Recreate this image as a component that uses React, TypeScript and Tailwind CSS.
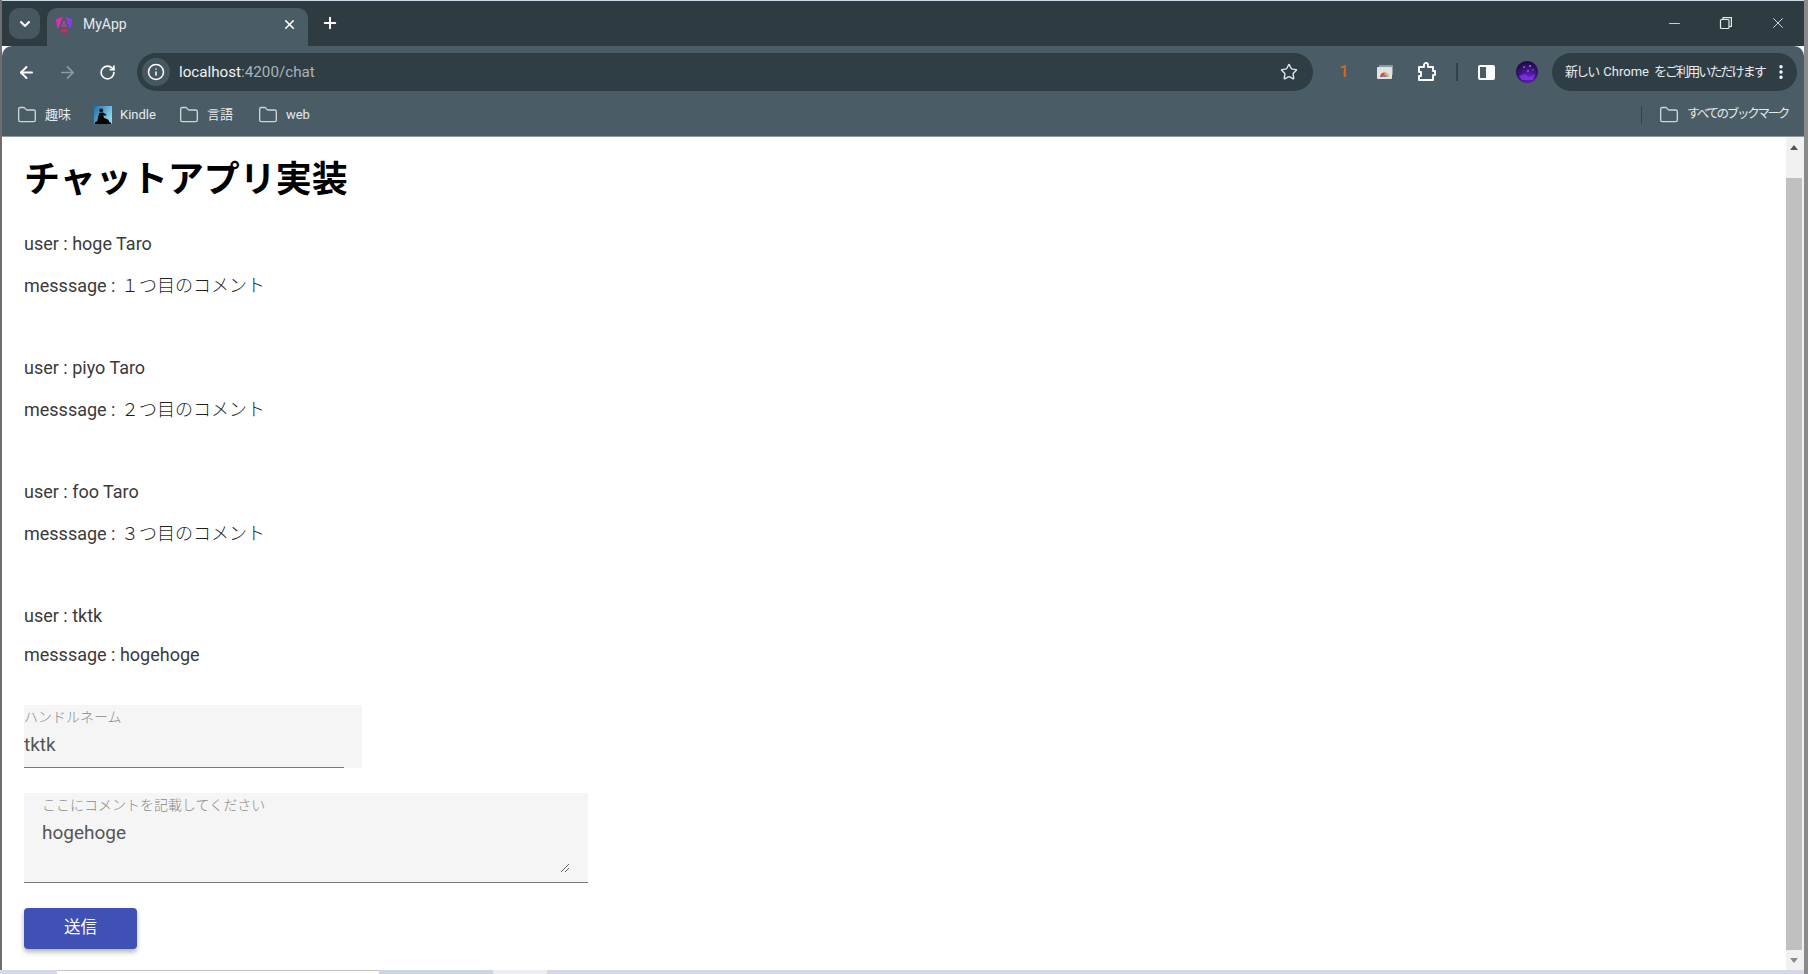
import { ArrowLeft, ArrowRight, ChevronDown, Folder, Info, Minus, MoreVertical, Plus, RotateCw, Star, X } from "lucide-react";
import type { ReactNode } from "react";

const font = "font-['Roboto','Noto_Sans_CJK_JP',sans-serif]";

function AngularLogo() {
  return (
    <svg width="18" height="20" viewBox="0 0 20 21" className="shrink-0">
      <path d="M1 4.2 L8.6 1 L4.2 13.4 L2.6 14.6 Z" fill="#e22bb4" />
      <path d="M19 4.2 L11.4 1 L15.8 13.4 L17.4 14.6 Z" fill="#8a3ce6" />
      <path d="M5 15.8 H15 L10 20 Z" fill="#e4215a" />
      <path d="M10 5 L7 12.4 H13 Z" fill="#c8409a" />
      <path d="M10 8.6 L8.9 11.2 H11.1 Z" fill="#4a5c65" />
    </svg>
  );
}

function KindleIcon() {
  return (
    <svg width="18" height="18" viewBox="0 0 20 20" className="shrink-0">
      <defs>
        <linearGradient id="kd" x1="0" y1="0" x2="1" y2="0.6">
          <stop offset="0" stopColor="#1c6fa8" />
          <stop offset="1" stopColor="#8fd8ee" />
        </linearGradient>
      </defs>
      <rect width="20" height="20" fill="url(#kd)" />
      <circle cx="8" cy="4.8" r="2.1" fill="#060606" />
      <path d="M6 7.4 L10 7.2 L14 9.6 L12.6 10.8 L10.4 10 L11 13 L16 15.4 L17.6 18.4 H19 V20 H1 V18 L3.6 16.6 L4.8 11 Z" fill="#060606" />
    </svg>
  );
}

function Bookmark({ label, icon, labelClass = "text-[13px]", className = "" }: { label: string; icon?: ReactNode; labelClass?: string; className?: string }) {
  return (
    <div className={`flex items-center gap-[8px] ${className}`}>
      {icon ?? <Folder size={20} strokeWidth={1.6} className="text-[#cfd6da]" />}
      <span className={`${labelClass} text-[#e6eaec] whitespace-nowrap`}>{label}</span>
    </div>
  );
}

function Comment({ user, message }: { user: string; message: string }) {
  return (
    <div className="mb-[58px]">
      <p className="h-6 leading-6 mb-[18px]">user : {user}</p>
      <p className="h-6 leading-6">messsage : <span className="ml-px font-light text-[#1f1f1f]">{message}</span></p>
    </div>
  );
}

export default function App() {
  return (
    <div className={`${font} w-[1808px] h-[974px] flex overflow-hidden bg-white`}>
      <div className="flex-1 min-w-0 flex flex-col border-l-2 border-[#6e6e6e]">
        <div className="h-px bg-[#c9dbe6] shrink-0" />

        {/* tab strip */}
        <div className="h-[45px] shrink-0 bg-[#2e3b41] flex items-end pl-[7px]">
          <div className="w-[31px] h-[31px] mb-[7px] rounded-[10px] bg-[#46575f] flex items-center justify-center">
            <ChevronDown size={16} strokeWidth={3} className="text-white" />
          </div>
          <div className="w-[261px] h-[38px] ml-[7px] rounded-t-[10px] bg-[#4a5c65] flex items-center pl-[8px] pr-[11px] pb-[5px]">
            <AngularLogo />
            <span className="ml-[10px] text-[14px] text-[#e6eaec]">MyApp</span>
            <X size={15} strokeWidth={2.6} className="ml-auto text-white" />
          </div>
          <Plus size={18} strokeWidth={2.6} className="ml-[13px] mb-[14px] text-white" />
          <div className="ml-auto flex items-center mb-[14px] text-[#e6eaec]">
            <Minus size={17} strokeWidth={1.2} className="mr-[36px]" />
            <svg width="14" height="14" viewBox="0 0 14 14" fill="none" stroke="currentColor" strokeWidth="1.2" className="mr-[36px]">
              <rect x="1.5" y="3.5" width="8.5" height="9" rx="1" />
              <path d="M4 3.5V1.6H12.4V10.5H10" />
            </svg>
            <X size={18} strokeWidth={1.2} className="mr-[17px]" />
          </div>
        </div>

        {/* toolbar */}
        <div className="h-[47px] shrink-0 bg-[#4a5c65] flex items-center pl-[15px] pt-[5px] rounded-t-[10px]">
          <ArrowLeft size={19} strokeWidth={2.4} className="text-white" />
          <ArrowRight size={19} strokeWidth={2.2} className="ml-[22px] text-[#8d9ba2]" />
          <RotateCw size={17} strokeWidth={2.4} className="ml-[22px] text-white" />
          <div className="ml-[21px] w-[1176px] h-[38px] rounded-full bg-[#2f3e45] flex items-center pl-[5px] pr-[15px]">
            <div className="w-7 h-7 rounded-full bg-[#46575f] flex items-center justify-center">
              <Info size={18} strokeWidth={2} className="text-white" />
            </div>
            <span className="ml-[9px] text-[15.2px] text-[#f0f2f3]">localhost<span className="text-[#a9b4b9]">:4200/chat</span></span>
            <Star size={18} strokeWidth={1.9} className="ml-auto text-[#dfe4e6]" />
          </div>
          <span className="ml-[26px] w-3 text-[17px] font-medium text-[#d4691f]">1</span>
          <svg width="16" height="14" viewBox="0 0 16 14" className="ml-[26px]">
            <rect x="2" y="0" width="14" height="10" rx="1" fill="#8f9aa0" />
            <rect x="0" y="2" width="15" height="12" rx="1" fill="#dfe3e5" />
            <path d="M3 12a4.5 4.5 0 0 1 9 0Z" fill="#d9483b" />
            <path d="M7.5 12V7.5a4.5 4.5 0 0 1 4.5 4.5Z" fill="#e8b93a" />
            <path d="M5.2 12a2.3 2.3 0 0 1 4.6 0Z" fill="#4a8ee8" />
          </svg>
          <svg width="20" height="20" viewBox="0 0 20 20" fill="none" stroke="#fff" strokeWidth="1.9" strokeLinejoin="round" className="ml-[24px]">
            <path d="M2 5H7V3a2 2 0 0 1 4 0V5H16V9H18V13H16V18H2V14H4V10H2Z" />
          </svg>
          <div className="ml-[19px] w-[2px] h-[18px] bg-[#33424a]" />
          <div className="ml-[20px] w-[17px] h-[15px] rounded-[2px] border-2 border-white bg-[#4a5c65] flex justify-end">
            <div className="w-[7px] bg-white" />
          </div>
          <svg width="22" height="22" viewBox="0 0 22 22" className="ml-[21px]">
            <defs>
              <radialGradient id="av" cx="0.55" cy="0.75" r="0.75">
                <stop offset="0" stopColor="#6a22c9" />
                <stop offset="1" stopColor="#170a3d" />
              </radialGradient>
            </defs>
            <circle cx="11" cy="11" r="11" fill="url(#av)" />
            <path d="M3 15 L9 13 L13 16 L19 13 L17 19 L6 19 Z" fill="#7a2ee0" />
            <circle cx="8" cy="6" r="1" fill="#8a6ad0" />
            <circle cx="14" cy="5" r="0.9" fill="#a08ae0" />
            <circle cx="12" cy="10" r="1" fill="#7f5cd0" />
            <circle cx="17" cy="9" r="0.8" fill="#8a6ad0" />
          </svg>
          <div className="ml-[14px] w-[245px] h-[38px] rounded-full bg-[#2f3e45] flex items-center pl-[13px] pr-[7px]">
            <span className="text-[13px] text-[#e8ecee] whitespace-nowrap tracking-[-1.9px]">新しい<span className="inline-block mx-[5px] tracking-normal">Chrome</span>をご利用いただけます</span>
            <MoreVertical size={18} strokeWidth={2.6} className="ml-auto text-white" />
          </div>
        </div>

        {/* bookmarks */}
        <div className="h-[44px] shrink-0 bg-[#4a5c65] flex items-center pl-[15px] pr-[16px] gap-[23px] border-b border-[#8f9a9f]">
          <Bookmark label="趣味" />
          <Bookmark label="Kindle" icon={<KindleIcon />} />
          <Bookmark label="言語" />
          <Bookmark label="web" className="ml-[2px]" />
          <div className="ml-auto flex items-center gap-[17px]">
            <div className="w-px h-[18px] bg-[#33424a]" />
            <Bookmark label="すべてのブックマーク" labelClass="text-[12.5px] tracking-[-2.3px]" />
          </div>
        </div>

        {/* page */}
        <div className="flex-1 flex min-h-0">
          <main className="flex-1 pl-[22px] text-[18px] text-[#3a3a3a]">
            <h1 className="mt-[21px] mb-[30px] h-11 leading-[44px] text-[36px] font-bold text-black whitespace-nowrap">チャットアプリ実装</h1>
            <Comment user="hoge Taro" message="１つ目のコメント" />
            <Comment user="piyo Taro" message="２つ目のコメント" />
            <Comment user="foo Taro" message="３つ目のコメント" />
            <p className="h-6 leading-6 mb-[15px]">user : tktk</p>
            <p className="h-6 leading-6">messsage : hogehoge</p>

            <div className="mt-[38px] w-[338px] h-[63px] bg-[#f5f5f5] relative flex flex-col">
              <span className="mt-[3px] text-[14px] leading-[18px] text-[#8a8a8a] font-light">ハンドルネーム</span>
              <span className="mt-[7px] text-[19px] leading-6 text-[#555]">tktk</span>
              <div className="absolute left-0 bottom-0 w-[320px] h-px bg-[#777]" />
            </div>

            <div className="mt-[25px] w-[564px] h-[90px] bg-[#f5f5f5] border-b border-[#777] relative pl-[18px]">
              <p className="pt-[3px] text-[14px] leading-[18px] text-[#8a8a8a] font-light">ここにコメントを記載してください</p>
              <p className="mt-[7px] text-[19px] leading-6 text-[#555]">hogehoge</p>
              <svg width="10" height="10" viewBox="0 0 10 10" stroke="#555" strokeWidth="0.9" className="absolute right-[18px] bottom-[9px]">
                <path d="M1 9L9 1M5 9L9 5" />
              </svg>
            </div>

            <button className="mt-[25px] w-[113px] h-[41px] rounded-[4px] bg-[#3f51b5] text-white text-[16.5px] shadow-[0_3px_5px_rgba(0,0,0,0.3)]">送信</button>
          </main>

          {/* scrollbar */}
          <div className="w-[18px] bg-[#f1f1f1] flex flex-col items-center shrink-0 pr-[2px]">
            <div className="h-[20px] flex items-center justify-center">
              <div className="w-0 h-0 border-x-[4px] border-x-transparent border-b-[5px] border-b-[#555]" />
            </div>
            <div className="w-full h-[772px] mt-[21px] bg-[#c0c0c0]" />
            <div className="flex-1 flex items-center justify-center">
              <div className="w-0 h-0 border-x-[4px] border-x-transparent border-t-[5px] border-t-[#8a8a8a]" />
            </div>
          </div>
        </div>

        {/* taskbar sliver */}
        <div className="h-[4px] shrink-0 bg-[#d6d8ea] flex -ml-[2px]">
          <div className="w-[57px]" />
          <div className="w-[322px] bg-white border-t border-[#c4c4c4]" />
          <div className="w-[114px] bg-[#cdd6de]" />
          <div className="w-[54px] bg-[#ececf2]" />
        </div>
      </div>
      <div className="w-[4px] bg-[#8a8a8a] shrink-0" />
    </div>
  );
}
